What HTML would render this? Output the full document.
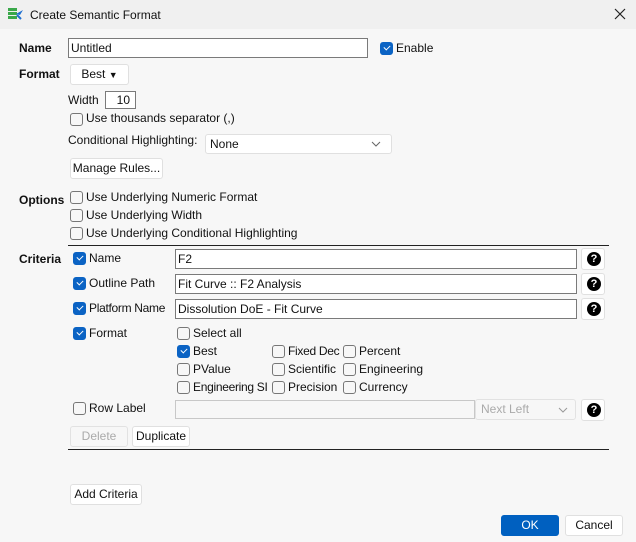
<!DOCTYPE html>
<html><head><meta charset="utf-8"><style>
*{box-sizing:border-box;margin:0;padding:0}
body{width:636px;height:542px;background:#f7f7f7;font-family:"Liberation Sans",Arial,sans-serif;font-size:12px;color:#111;position:relative;overflow:hidden}
.a{position:absolute;white-space:nowrap}
.t{position:absolute;line-height:14px;white-space:nowrap}
.b{font-weight:bold}
.inp{position:absolute;background:#fff;border:1px solid #7a7a7a;height:20px;line-height:18px;padding-left:2px}
.btn{position:absolute;background:#fff;border:1px solid #e0e0e0;border-radius:3px;height:21px;line-height:19px;text-align:center}
.cb{position:absolute;width:13px;height:13px;border:1px solid #777;border-radius:3px;background:#f7f7f7}
.cb.on{background:#0b63c4;border-color:#0b63c4}
.cb.on:after{content:"";position:absolute;left:3px;top:2px;width:5px;height:3px;border-left:1.5px solid #fff;border-bottom:1.5px solid #fff;transform:rotate(-45deg)}
.help{position:absolute;width:24px;height:22px;background:#fff;border:1px solid #e0e0e0;border-radius:3px}
.help:after{content:"?";position:absolute;left:5px;top:3px;width:14px;height:14px;border-radius:50%;background:#000;color:#fff;font-weight:bold;font-size:11px;line-height:14px;text-align:center}
.line{position:absolute;height:1px;background:#222;left:68px;width:541px}
.n{letter-spacing:-0.3px}
</style></head><body>
<div class="a" style="left:0;top:0;width:636px;height:29px;background:#f0f0f0"></div>
<svg class="a" style="left:8px;top:7px" width="16" height="14" viewBox="0 0 16 14"><rect x="0" y="1" width="9" height="3" fill="#3aa84a"/><rect x="0" y="5" width="9" height="3" fill="#3aa84a"/><rect x="0" y="9" width="9" height="3" fill="#3aa84a"/><path d="M8 7 L15 3 L12 8 Z" fill="#1e6fd0"/><path d="M9 8 L13 12" stroke="#1e6fd0" stroke-width="2"/></svg>
<div class="t" style="left:30px;top:8px">Create Semantic Format</div>
<svg class="a" style="left:614px;top:8px" width="12" height="12"><path d="M1 1L11 11M11 1L1 11" stroke="#222" stroke-width="1.2"/></svg>

<div class="t b" style="left:19px;top:41px">Name</div>
<div class="inp" style="left:68px;top:38px;width:300px">Untitled</div>
<div class="cb on" style="left:380px;top:42px"></div>
<div class="t" style="left:396px;top:41px">Enable</div>

<div class="t b" style="left:19px;top:67px">Format</div>
<div class="btn" style="left:70px;top:64px;width:59px">Best <span style="font-size:9px">▼</span></div>

<div class="t" style="left:68px;top:93px">Width</div>
<div class="inp" style="left:105px;top:91px;width:31px;height:18px;line-height:16px;text-align:right;padding-right:5px">10</div>
<div class="cb" style="left:70px;top:113px"></div>
<div class="t" style="left:86px;top:111px">Use thousands separator (,)</div>
<div class="t" style="left:68px;top:133px">Conditional Highlighting:</div>
<div class="btn" style="left:205px;top:134px;width:187px;height:20px;text-align:left;padding-left:4px">None</div>
<svg class="a" style="left:371px;top:141px" width="10" height="6"><path d="M1 1L5 5L9 1" stroke="#666" fill="none"/></svg>
<div class="btn" style="left:70px;top:158px;width:93px">Manage Rules...</div>

<div class="t b" style="left:19px;top:193px">Options</div>
<div class="cb" style="left:70px;top:191px"></div><div class="t" style="left:86px;top:190px">Use Underlying Numeric Format</div>
<div class="cb" style="left:70px;top:209px"></div><div class="t" style="left:86px;top:208px">Use Underlying Width</div>
<div class="cb" style="left:70px;top:227px"></div><div class="t" style="left:86px;top:226px">Use Underlying Conditional Highlighting</div>

<div class="line" style="top:245px"></div>
<div class="t b" style="left:19px;top:252px">Criteria</div>

<div class="cb on" style="left:73px;top:252px"></div><div class="t" style="left:89px;top:251px">Name</div>
<div class="inp" style="left:175px;top:249px;width:402px">F2</div>
<div class="help" style="left:581px;top:248px"></div>
<div class="cb on" style="left:73px;top:277px"></div><div class="t" style="left:89px;top:276px">Outline Path</div>
<div class="inp" style="left:175px;top:274px;width:402px">Fit Curve :: F2 Analysis</div>
<div class="help" style="left:581px;top:273px"></div>
<div class="cb on" style="left:73px;top:302px"></div><div class="t n" style="left:89px;top:301px">Platform Name</div>
<div class="inp" style="left:175px;top:299px;width:402px">Dissolution DoE - Fit Curve</div>
<div class="help" style="left:581px;top:298px"></div>

<div class="cb on" style="left:73px;top:327px"></div><div class="t" style="left:89px;top:326px">Format</div>
<div class="cb" style="left:177px;top:327px"></div><div class="t" style="left:193px;top:326px">Select all</div>
<div class="cb on" style="left:177px;top:345px"></div><div class="t" style="left:193px;top:344px">Best</div>
<div class="cb" style="left:177px;top:363px"></div><div class="t" style="left:193px;top:362px">PValue</div>
<div class="cb" style="left:177px;top:381px"></div><div class="t n" style="left:193px;top:380px">Engineering SI</div>
<div class="cb" style="left:272px;top:345px"></div><div class="t n" style="left:288px;top:344px">Fixed Dec</div>
<div class="cb" style="left:272px;top:363px"></div><div class="t" style="left:288px;top:362px">Scientific</div>
<div class="cb" style="left:272px;top:381px"></div><div class="t" style="left:288px;top:380px">Precision</div>
<div class="cb" style="left:343px;top:345px"></div><div class="t" style="left:359px;top:344px">Percent</div>
<div class="cb" style="left:343px;top:363px"></div><div class="t" style="left:359px;top:362px">Engineering</div>
<div class="cb" style="left:343px;top:381px"></div><div class="t" style="left:359px;top:380px">Currency</div>

<div class="cb" style="left:73px;top:402px"></div><div class="t" style="left:89px;top:401px">Row Label</div>
<div class="inp" style="left:175px;top:400px;width:300px;height:19px;border-color:#c8c8c8;background:#f7f7f7"></div>
<div class="btn" style="left:475px;top:399px;width:101px;text-align:left;padding-left:5px;color:#aaa;background:#f7f7f7;border-color:#e2e2e2">Next Left</div>
<svg class="a" style="left:558px;top:407px" width="10" height="6"><path d="M1 1L5 5L9 1" stroke="#999" fill="none"/></svg>
<div class="help" style="left:581px;top:399px"></div>

<div class="btn" style="left:70px;top:426px;width:58px;color:#aaa;background:#f7f7f7;border-color:#e2e2e2">Delete</div>
<div class="btn" style="left:132px;top:426px;width:58px">Duplicate</div>
<div class="line" style="top:449px"></div>

<div class="btn" style="left:70px;top:484px;width:72px">Add Criteria</div>
<div class="btn" style="left:501px;top:515px;width:58px;background:#0060c0;border-color:#0060c0;color:#fff">OK</div>
<div class="btn" style="left:565px;top:515px;width:58px">Cancel</div>
</body></html>
